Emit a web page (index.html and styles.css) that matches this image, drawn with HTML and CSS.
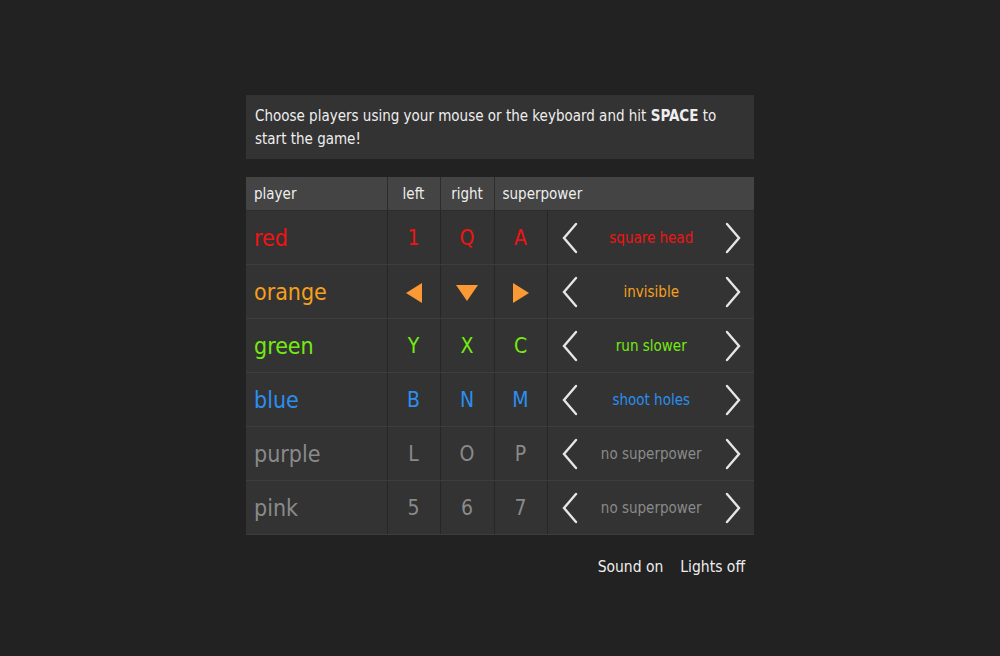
FILE: index.html
```html
<!DOCTYPE html>
<html lang="en">
<head>
  <meta charset="UTF-8">
  <title>Achtung</title>
  <link rel="stylesheet" href="styles.css">
</head>
<body>

  <div class="menu">
    <div class="intro">
      Choose players using your mouse or the keyboard and hit <b>SPACE</b> to start the game!
    </div>

    <table class="players">
      <colgroup>
        <col class="c-name">
        <col class="c-key">
        <col class="c-key2">
        <col class="c-key">
        <col>
      </colgroup>
      <thead>
        <tr>
          <th>player</th>
          <th class="key-col">left</th>
          <th class="key-col">right</th>
          <th colspan="2">superpower</th>
        </tr>
      </thead>
      <tbody>
        <tr class="red">
          <td class="name">red</td>
          <td class="key">1</td>
          <td class="key">Q</td>
          <td class="key">A</td>
          <td class="power">
            <div class="picker">
              <svg class="chev" viewBox="0 0 18 32"><path d="M15 2 L3 16 L15 30"/></svg>
              <span>square head</span>
              <svg class="chev" viewBox="0 0 18 32"><path d="M3 2 L15 16 L3 30"/></svg>
            </div>
          </td>
        </tr>
        <tr class="orange">
          <td class="name">orange</td>
          <td class="key"><span class="tri tri-left"></span></td>
          <td class="key"><span class="tri tri-down"></span></td>
          <td class="key"><span class="tri tri-right"></span></td>
          <td class="power">
            <div class="picker">
              <svg class="chev" viewBox="0 0 18 32"><path d="M15 2 L3 16 L15 30"/></svg>
              <span>invisible</span>
              <svg class="chev" viewBox="0 0 18 32"><path d="M3 2 L15 16 L3 30"/></svg>
            </div>
          </td>
        </tr>
        <tr class="green">
          <td class="name">green</td>
          <td class="key">Y</td>
          <td class="key">X</td>
          <td class="key">C</td>
          <td class="power">
            <div class="picker">
              <svg class="chev" viewBox="0 0 18 32"><path d="M15 2 L3 16 L15 30"/></svg>
              <span>run slower</span>
              <svg class="chev" viewBox="0 0 18 32"><path d="M3 2 L15 16 L3 30"/></svg>
            </div>
          </td>
        </tr>
        <tr class="blue">
          <td class="name">blue</td>
          <td class="key">B</td>
          <td class="key">N</td>
          <td class="key">M</td>
          <td class="power">
            <div class="picker">
              <svg class="chev" viewBox="0 0 18 32"><path d="M15 2 L3 16 L15 30"/></svg>
              <span>shoot holes</span>
              <svg class="chev" viewBox="0 0 18 32"><path d="M3 2 L15 16 L3 30"/></svg>
            </div>
          </td>
        </tr>
        <tr class="off">
          <td class="name">purple</td>
          <td class="key">L</td>
          <td class="key">O</td>
          <td class="key">P</td>
          <td class="power">
            <div class="picker">
              <svg class="chev" viewBox="0 0 18 32"><path d="M15 2 L3 16 L15 30"/></svg>
              <span>no superpower</span>
              <svg class="chev" viewBox="0 0 18 32"><path d="M3 2 L15 16 L3 30"/></svg>
            </div>
          </td>
        </tr>
        <tr class="off">
          <td class="name">pink</td>
          <td class="key">5</td>
          <td class="key">6</td>
          <td class="key">7</td>
          <td class="power">
            <div class="picker">
              <svg class="chev" viewBox="0 0 18 32"><path d="M15 2 L3 16 L15 30"/></svg>
              <span>no superpower</span>
              <svg class="chev" viewBox="0 0 18 32"><path d="M3 2 L15 16 L3 30"/></svg>
            </div>
          </td>
        </tr>
      </tbody>
    </table>

    <div class="options">
      <span>Sound on</span>
      <span>Lights off</span>
    </div>
  </div>

</body>
</html>
```

FILE: styles.css
```css
body {
  margin: 0;
  background: #222;
  color: #eee;
  font-family: "DejaVu Sans Condensed", "DejaVu Sans", sans-serif;
  font-size: 15px;
}

.menu {
  width: 508px;
  margin: 95px auto 0;
}

.intro {
  background: #333;
  padding: 10px 9px 8px;
  line-height: 23px;
}

.intro b {
  font-weight: bold;
}

.players {
  width: 100%;
  margin-top: 18px;
  border-collapse: collapse;
  table-layout: fixed;
}

.c-name { width: 141px; }
.c-key { width: 53px; }
.c-key2 { width: 54px; }

.players th {
  background: #444;
  font-weight: normal;
  text-align: left;
  height: 33px;
  padding: 0 8px;
  border-left: 1px solid #2c2c2c;
  border-bottom: 1px solid #2c2c2c;
}

.players th:first-child {
  border-left: none;
}

.players th.key-col {
  text-align: center;
  padding: 0;
}

.players td {
  background: #333;
  height: 53px;
  padding: 0;
  border-left: 1px solid #262626;
  border-bottom: 1px solid #3d3d3d;
}

.players td:first-child {
  border-left: none;
}

.name {
  font-size: 23px;
  padding-left: 8px !important;
}

.key {
  font-size: 21px;
  text-align: center;
}

.picker {
  display: flex;
  align-items: center;
  justify-content: space-between;
  padding: 0 12px 0 13px;
  font-size: 15px;
}

.chev {
  width: 18px;
  height: 32px;
  fill: none;
  stroke: #e6e6e6;
  stroke-width: 2.4;
  stroke-linecap: round;
  stroke-linejoin: miter;
}

.tri {
  display: inline-block;
  width: 0;
  height: 0;
  vertical-align: middle;
}

.tri-left {
  border-top: 10px solid transparent;
  border-bottom: 10px solid transparent;
  border-right: 16px solid #fb9a35;
}

.tri-right {
  border-top: 10px solid transparent;
  border-bottom: 10px solid transparent;
  border-left: 16px solid #fb9a35;
}

.tri-down {
  border-left: 11px solid transparent;
  border-right: 11px solid transparent;
  border-top: 16px solid #fb9a35;
}

.red { color: #f01414; }
.orange { color: #f5a01c; }
.green { color: #74ea12; }
.blue { color: #2b8ef0; }
.off { color: #8a8a8a; }

.options {
  display: flex;
  justify-content: flex-end;
  gap: 17px;
  padding: 23px 9px 0 0;
  font-size: 15.5px;
}
```
